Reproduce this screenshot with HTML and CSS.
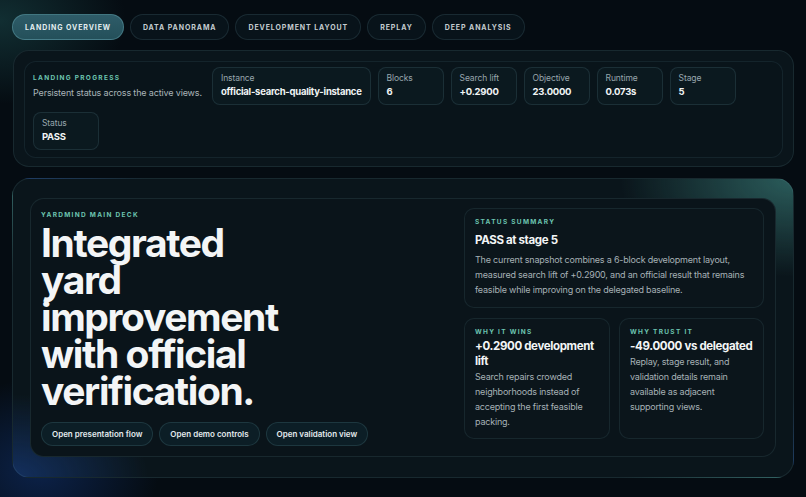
FILE: index.html
```html
<!DOCTYPE html>
<html lang="en">
<head>
  <meta charset="UTF-8" />
  <title>YardMind - Landing Overview</title>
  <link rel="stylesheet" href="styles.css">
</head>
<body>

  <nav class="tabs">
    <button class="tab active">Landing Overview</button>
    <button class="tab">Data Panorama</button>
    <button class="tab">Development Layout</button>
    <button class="tab">Replay</button>
    <button class="tab">Deep Analysis</button>
  </nav>

  <section class="panel progress-panel">
    <div class="progress-inner">
      <div class="progress-intro">
        <div class="eyebrow">Landing progress</div>
        <p>Persistent status across the active views.</p>
      </div>
      <div class="stat">
        <span class="stat-label">Instance</span>
        <span class="stat-value">official-search-quality-instance</span>
      </div>
      <div class="stat">
        <span class="stat-label">Blocks</span>
        <span class="stat-value">6</span>
      </div>
      <div class="stat">
        <span class="stat-label">Search lift</span>
        <span class="stat-value">+0.2900</span>
      </div>
      <div class="stat">
        <span class="stat-label">Objective</span>
        <span class="stat-value">23.0000</span>
      </div>
      <div class="stat">
        <span class="stat-label">Runtime</span>
        <span class="stat-value">0.073s</span>
      </div>
      <div class="stat">
        <span class="stat-label">Stage</span>
        <span class="stat-value">5</span>
      </div>
      <div class="stat">
        <span class="stat-label">Status</span>
        <span class="stat-value">PASS</span>
      </div>
    </div>
  </section>

  <section class="panel deck-panel">
    <div class="deck">
      <div class="deck-main">
        <div class="eyebrow">YardMind main deck</div>
        <h1>Integrated yard improvement with official verification.</h1>
        <div class="actions">
          <button class="pill">Open presentation flow</button>
          <button class="pill">Open demo controls</button>
          <button class="pill">Open validation view</button>
        </div>
      </div>

      <div class="deck-side">
        <div class="card summary">
          <div class="eyebrow">Status summary</div>
          <h3>PASS at stage 5</h3>
          <p>The current snapshot combines a 6-block development layout, measured search lift of +0.2900, and an official result that remains feasible while improving on the delegated baseline.</p>
        </div>
        <div class="card-row">
          <div class="card">
            <div class="eyebrow">Why it wins</div>
            <h3>+0.2900 development lift</h3>
            <p>Search repairs crowded neighborhoods instead of accepting the first feasible packing.</p>
          </div>
          <div class="card">
            <div class="eyebrow">Why trust it</div>
            <h3>-49.0000 vs delegated</h3>
            <p>Replay, stage result, and validation details remain available as adjacent supporting views.</p>
          </div>
        </div>
      </div>
    </div>
  </section>

</body>
</html>
```

FILE: styles.css
```css
* {
  box-sizing: border-box;
  margin: 0;
  padding: 0;
}

html, body {
  height: 100%;
}

body {
  font-family: Inter, 'Noto Sans', sans-serif;
  color: #e9eef0;
  padding: 14px 12px 0 12px;
  overflow: hidden;
  background:
    radial-gradient(ellipse 180px 120px at 0px 20px, rgba(40, 110, 110, 0.35), transparent 70%),
    radial-gradient(ellipse 170px 130px at 40px 470px, rgba(20, 60, 140, 0.45), transparent 70%),
    #050c12;
}

button {
  font-family: inherit;
  cursor: pointer;
}

/* tabs */

.tabs {
  display: flex;
  gap: 6px;
  height: 26px;
  margin-bottom: 10px;
}

.tab {
  height: 26px;
  padding: 0 12px;
  border-radius: 13px;
  border: 1px solid rgba(120, 170, 180, 0.16);
  background: #08131a;
  color: #c4ccd0;
  font-size: 7px;
  font-weight: 700;
  letter-spacing: 0.9px;
  text-transform: uppercase;
}

.tab.active {
  background: linear-gradient(180deg, #2e5c68, #24505a);
  border-color: rgba(120, 190, 200, 0.35);
  color: #e3eef0;
}

/* panels */

.panel {
  border-radius: 16px;
  border: 1px solid rgba(110, 160, 170, 0.14);
  background: #0a151b;
}

.eyebrow {
  font-size: 6.5px;
  font-weight: 700;
  letter-spacing: 1.3px;
  text-transform: uppercase;
  color: #6cc4b0;
}

.progress-panel {
  margin-left: 1px;
  padding: 10px;
  height: 117px;
}

.progress-inner {
  display: flex;
  flex-wrap: wrap;
  align-items: center;
  align-content: flex-start;
  gap: 7px;
  padding: 5px 8px 6px 8px;
  border-radius: 12px;
  border: 1px solid rgba(110, 160, 170, 0.12);
  background: #09141a;
  height: 97px;
}

.progress-intro {
  width: 172px;
}

.progress-intro p {
  margin-top: 5px;
  font-size: 9px;
  letter-spacing: -0.15px;
  color: #a9b4b9;
  white-space: nowrap;
}

.stat {
  display: flex;
  flex-direction: column;
  gap: 3px;
  min-width: 66px;
  height: 38px;
  padding: 5px 8px;
  border-radius: 8px;
  border: 1px solid rgba(110, 170, 180, 0.16);
  background: rgba(12, 26, 33, 0.8);
}

.stat-label {
  font-size: 8.5px;
  letter-spacing: -0.1px;
  color: #98a6ad;
}

.stat-value {
  font-size: 9.5px;
  font-weight: 700;
  letter-spacing: -0.25px;
  color: #f1f4f5;
}

/* main deck */

.deck-panel {
  margin-top: 11px;
  height: 300px;
  padding: 19px 17px 20px 17px;
  border-radius: 18px;
  background:
    radial-gradient(ellipse 230px 130px at 100% 0%, rgba(60, 130, 125, 0.65), transparent 75%),
    radial-gradient(ellipse 180px 110px at 0% 100%, rgba(25, 65, 140, 0.6), transparent 75%),
    #0a151b;
}

.deck {
  display: grid;
  grid-template-columns: 1fr 300px;
  gap: 12px;
  height: 100%;
  padding: 9px 11px 10px 10px;
  border-radius: 14px;
  border: 1px solid rgba(110, 160, 170, 0.14);
  background: #0a141a;
}

.deck-main {
  display: flex;
  flex-direction: column;
  padding-top: 3px;
}

.deck-main h1 {
  margin-top: 5px;
  font-size: 39px;
  line-height: 37px;
  font-weight: 700;
  letter-spacing: -1.4px;
  color: #f3f5f6;
  width: 250px;
}

.actions {
  display: flex;
  gap: 6px;
  margin-top: 13px;
}

.pill {
  height: 24px;
  padding: 0 10px;
  border-radius: 12px;
  border: 1px solid rgba(110, 170, 180, 0.18);
  background: #0c1e26;
  color: #e4ebee;
  font-size: 8px;
  font-weight: 600;
}

.deck-side {
  display: flex;
  flex-direction: column;
  gap: 10px;
}

.card {
  padding: 9px 10px;
  border-radius: 10px;
  border: 1px solid rgba(110, 160, 170, 0.13);
  background: #0b151b;
}

.card h3 {
  margin-top: 3px;
  font-size: 11.5px;
  line-height: 15px;
  font-weight: 700;
  letter-spacing: -0.35px;
  color: #f3f5f6;
}

.card p {
  margin-top: 0;
  font-size: 9px;
  line-height: 15px;
  letter-spacing: -0.2px;
  color: #a6b1b6;
}

.summary {
  height: 100px;
}

.summary h3 {
  margin-top: 7px;
}

.summary p {
  margin-top: 4px;
}

.card-row {
  display: grid;
  grid-template-columns: 146px 1fr;
  gap: 9px;
  height: 120px;
}
```
